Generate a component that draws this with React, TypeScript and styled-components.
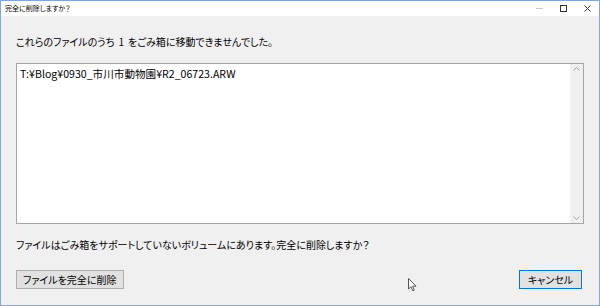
import React from "react";
import styled, { createGlobalStyle } from "styled-components";

const Global = createGlobalStyle`
  html, body { margin: 0; padding: 0; background: #f0f0f0; }
  body { font-family: "Noto Sans CJK JP", "Noto Sans", sans-serif; }
`;

const Window = styled.div`
  position: relative;
  width: 600px;
  height: 306px;
  box-sizing: border-box;
  border: 1px solid #7ea7da;
  background: #f0f0f0;
  display: flex;
  flex-direction: column;
  overflow: hidden;
`;

const TitleBar = styled.div`
  height: 15px;
  background: #ffffff;
  display: flex;
  align-items: center;
  padding-left: 4px;
  flex-shrink: 0;
`;

const TitleText = styled.span`
  font-family: "Noto Sans CJK JP", sans-serif;
  font-feature-settings: "palt";
  font-size: 7px;
  color: #000;
  flex: 1;
  line-height: 15px;
`;

const Controls = styled.div`
  display: flex;
  align-items: center;
  height: 15px;
`;

const CtrlBtn = styled.div`
  width: 24px;
  height: 15px;
  display: flex;
  align-items: center;
  justify-content: center;
`;

const Body = styled.div`
  flex: 1;
  display: flex;
  flex-direction: column;
  padding: 0 15px;
`;

const Message = styled.div<{ $mt: number }>`
  margin-top: ${(p) => p.$mt}px;
  font-family: "Noto Sans CJK JP", sans-serif;
  font-feature-settings: "palt";
  font-size: 10px;
  line-height: 16px;
  height: 16px;
  color: #000;
  white-space: nowrap;
`;

const Num = styled.span`
  padding: 0 4px;
`;

const TextBox = styled.div`
  margin-top: 13px;
  height: 161px;
  box-sizing: border-box;
  border: 1px solid #a6a6a6;
  background: #fff;
  display: flex;
`;

const PathText = styled.div`
  flex: 1;
  padding: 3px 3px;
  font-family: "Noto Sans CJK JP", sans-serif;
  font-feature-settings: "palt";
  font-size: 10.6px;
  line-height: 14px;
  color: #000;
`;

const ScrollBar = styled.div`
  width: 13px;
  background: #f0f0f0;
  display: flex;
  flex-direction: column;
  justify-content: space-between;
  align-items: center;
  padding: 3px 0;
`;

const ButtonRow = styled.div`
  margin-top: 17px;
  display: flex;
  justify-content: space-between;
  padding-right: 2px;
`;

const Button = styled.div<{ $primary?: boolean }>`
  height: 19px;
  box-sizing: border-box;
  padding: 0 6px;
  min-width: 63px;
  background: #e1e1e1;
  border: 1px solid ${(p) => (p.$primary ? "#0078d7" : "#adadad")};
  display: flex;
  align-items: center;
  justify-content: center;
  font-family: "Noto Sans CJK JP", sans-serif;
  font-feature-settings: "palt";
  font-size: 10px;
  color: #000;
`;

const Cursor = styled.svg`
  position: absolute;
  left: 407px;
  top: 277px;
`;

const Chevron = ({ up }: { up?: boolean }) => (
  <svg width="7" height="4" viewBox="0 0 7 4">
    <path
      d={up ? "M0.5 3.5 L3.5 0.5 L6.5 3.5" : "M0.5 0.5 L3.5 3.5 L6.5 0.5"}
      fill="none"
      stroke="#a3a3a3"
      strokeWidth="1"
    />
  </svg>
);

export default function App() {
  return (
    <>
      <Global />
      <Window>
        <TitleBar>
          <TitleText>完全に削除しますか？</TitleText>
          <Controls>
            <CtrlBtn>
              <svg width="7" height="1" viewBox="0 0 7 1">
                <rect width="7" height="1" fill="#c8c8c8" />
              </svg>
            </CtrlBtn>
            <CtrlBtn>
              <svg width="7" height="7" viewBox="0 0 7 7">
                <rect x="0.5" y="0.5" width="6" height="6" fill="none" stroke="#333" />
              </svg>
            </CtrlBtn>
            <CtrlBtn>
              <svg width="7" height="7" viewBox="0 0 7 7">
                <path d="M0.5 0.5 L6.5 6.5 M6.5 0.5 L0.5 6.5" stroke="#333" strokeWidth="1" />
              </svg>
            </CtrlBtn>
          </Controls>
        </TitleBar>
        <Body>
          <Message $mt={18}>
            これらのファイルのうち<Num>1</Num>をごみ箱に移動できませんでした。
          </Message>
          <TextBox>
            <PathText>T:¥Blog¥0930_市川市動物園¥R2_06723.ARW</PathText>
            <ScrollBar>
              <Chevron up />
              <Chevron />
            </ScrollBar>
          </TextBox>
          <Message $mt={13}>
            ファイルはごみ箱をサポートしていないボリュームにあります。完全に削除しますか？
          </Message>
          <ButtonRow>
            <Button>ファイルを完全に削除</Button>
            <Button $primary>キャンセル</Button>
          </ButtonRow>
        </Body>
        <Cursor width="9" height="14" viewBox="0 0 9 14">
          <path
            d="M0.5 0.5 L0.5 11 L3 8.7 L4.8 12.8 L6.3 12.1 L4.6 8.2 L8 8.2 Z"
            fill="#fff"
            stroke="#555"
            strokeWidth="1"
            strokeLinejoin="round"
          />
        </Cursor>
      </Window>
    </>
  );
}
